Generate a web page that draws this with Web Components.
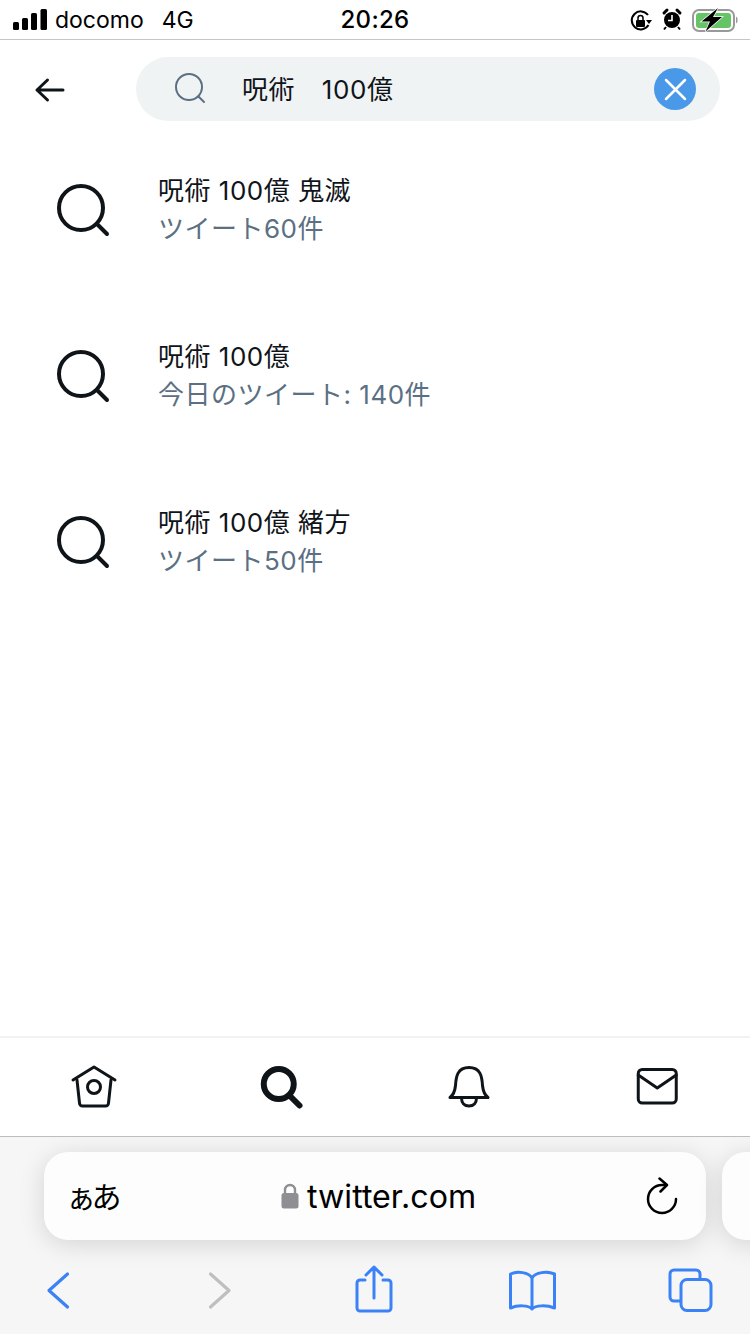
<!DOCTYPE html>
<html lang="ja">
<head>
<meta charset="utf-8">
<title>呪術 100億</title>
<style>
html, body { margin: 0; background: #fff; }
body { font-family: Inter, "Noto Sans CJK JP", sans-serif; }
#page { display: flex; flex-direction: column; width: 750px; height: 1334px; overflow: hidden; }
#results { flex: 1; }
</style>
</head>
<body>
<div id="page">
  <status-bar></status-bar>
  <search-header>呪術　100億</search-header>
  <div id="results">
    <result-row><span>呪術 100億 鬼滅</span><span slot="sub">ツイート60件</span></result-row>
    <result-row><span>呪術 100億</span><span slot="sub">今日のツイート: 140件</span></result-row>
    <result-row><span>呪術 100億 緒方</span><span slot="sub">ツイート50件</span></result-row>
  </div>
  <tab-bar></tab-bar>
  <safari-bar></safari-bar>
</div>

<script>
class StatusBar extends HTMLElement {
  constructor() {
    super();
    this.attachShadow({ mode: "open" }).innerHTML = `
      <style>
        :host { display: flex; align-items: center; height: 39px; border-bottom: 1px solid #c6c6c8; box-sizing: content-box; position: relative; color: #000; font-family: Inter, sans-serif; }
        .left { display: flex; align-items: center; padding-left: 13px; font-size: 23px; }
        .left svg { margin-right: 8px; }
        .net { margin-left: 18px; }
        .time { position: absolute; left: 0; right: 0; text-align: center; font-size: 24px; font-weight: 500; letter-spacing: .3px; }
        .right { margin-left: auto; display: flex; align-items: center; padding-right: 8px; }
      </style>
      <div class="left">
        <svg width="34" height="21" viewBox="0 0 34 21"><rect x="0" y="13" width="6" height="8" rx="1.500"/><rect x="9" y="9" width="6" height="12" rx="1.500"/><rect x="18" y="4" width="6" height="17" rx="1.500"/><rect x="27.500" y="0" width="6.500" height="21" rx="1.500"/></svg>
        <span>docomo</span><span class="net">4G</span>
      </div>
      <div class="time">20:26</div>
      <div class="right">
        <svg width="114" height="30" viewBox="0 0 114 30">
          <path d="M20 10A9 9 0 1 0 20.500 20" fill="none" stroke="#000" stroke-width="2"/>
          <path d="M18 15h6l-3 4z"/>
          <rect x="8" y="15" width="9" height="7" rx="1"/>
          <path d="M10 15v-2a2.500 2.500 0 0 1 5 0v2" fill="none" stroke="#000" stroke-width="1.500"/>
          <circle cx="44" cy="15" r="8"/>
          <path d="M44 10v5.500h-4" fill="none" stroke="#fff" stroke-width="1.600"/>
          <path d="M36 8l3-3M52 8l-3-3" stroke="#000" stroke-width="3" stroke-linecap="round"/>
          <path d="M38 22l-2 2.500M50 22l2 2.500" stroke="#000" stroke-width="2"/>
          <rect x="65" y="5" width="41" height="21" rx="6" fill="none" stroke="#999" stroke-width="2"/>
          <rect x="68" y="8" width="35" height="15" rx="3" fill="#65c466"/>
          <path d="M108 11.500v7a3 3 0 0 0 1.500-3.500a3 3 0 0 0-1.500-3.500z" fill="#999"/>
          <path d="M90 3L73.500 16.500h8.500l-4.500 10L94 12h-9z" stroke="#fff" stroke-width="1.500" paint-order="stroke"/>
        </svg>
      </div>`;
  }
}

class SearchHeader extends HTMLElement {
  constructor() {
    super();
    this.attachShadow({ mode: "open" }).innerHTML = `
      <style>
        :host { display: flex; align-items: center; padding: 17px 30px 6px 30px; }
        .back { display: block; width: 36px; height: 30px; margin-right: 70px; }
        .pill { flex: 1; height: 64px; border-radius: 32px; background: #eff3f4; display: flex; align-items: center; padding: 0 24px 0 36px; color: #0f1419; font-size: 26px; letter-spacing: .6px; }
        .text { margin-left: 34px; flex: 1; padding-bottom: 4px; }
      </style>
      <svg class="back" viewBox="0 0 36 30"><path d="M7 16h26M17.500 6L7 16l10.500 10" fill="none" stroke="#0f1419" stroke-width="3" stroke-linecap="round" stroke-linejoin="round"/></svg>
      <div class="pill">
        <svg width="36" height="36" viewBox="0 0 36 36"><circle cx="17" cy="16" r="13" fill="none" stroke="#5b7083" stroke-width="2"/><path d="M26.500 25.500L32 31" stroke="#5b7083" stroke-width="2" stroke-linecap="round"/></svg>
        <span class="text"><slot></slot></span>
        <svg width="42" height="42" viewBox="0 0 42 42"><circle cx="21" cy="21" r="21" fill="#4a99e9"/><path d="M12 12l19 19M31 12L12 31" stroke="#fff" stroke-width="2.500" stroke-linecap="round"/></svg>
      </div>`;
  }
}

class ResultRow extends HTMLElement {
  constructor() {
    super();
    this.attachShadow({ mode: "open" }).innerHTML = `
      <style>
        :host { display: flex; align-items: center; height: 166px; padding-left: 54px; box-sizing: border-box; letter-spacing: .5px; }
        svg { flex: none; margin: 2px 45px 0 0; }
        .main { color: #0f1419; font-size: 26px; line-height: 38px; margin-left: -1px; }
        .sub { color: #5b7083; font-size: 26px; line-height: 38px; margin-left: -1px; }
      </style>
      <svg width="60" height="60" viewBox="0 0 60 60"><circle cx="27" cy="27" r="22" fill="none" stroke="#0f1419" stroke-width="4"/><path d="M43 43l10 10" stroke="#0f1419" stroke-width="4" stroke-linecap="round"/></svg>
      <div>
        <div class="main"><slot></slot></div>
        <div class="sub"><slot name="sub"></slot></div>
      </div>`;
  }
}

class TabBar extends HTMLElement {
  constructor() {
    super();
    this.attachShadow({ mode: "open" }).innerHTML = `
      <style>
        :host { display: flex; height: 98px; border-top: 2px solid #eff3f4; box-sizing: content-box; background: #fff; }
        div { flex: 1; display: flex; align-items: center; justify-content: center; }
        svg { fill: none; stroke: #0f1419; stroke-width: 3; stroke-linecap: round; stroke-linejoin: round; }
      </style>
      <div><svg width="50" height="50" viewBox="0 0 50 50"><path d="M4 18L25 5l21 13"/><path d="M8 18l2.500 23a3 3 0 0 0 3 3h23a3 3 0 0 0 3-3L42 18"/><circle cx="25" cy="25" r="6.500"/></svg></div>
      <div><svg width="50" height="50" viewBox="0 0 50 50"><circle cx="22.750" cy="22" r="15" stroke-width="6"/><path d="M34 34l9.500 9.500" stroke-width="6"/></svg></div>
      <div><svg width="50" height="50" viewBox="0 0 50 50"><path d="M6 35.500c4-3 5-7 5.500-12 .5-9 2-18 13.500-18s13 9 13.500 18c.5 5 1.500 9 5.500 12z"/><path d="M17.500 36c0 5 3 8 7.500 8s7.500-3 7.500-8"/></svg></div>
      <div><svg width="50" height="50" viewBox="0 0 50 50"><rect x="7.250" y="7.500" width="38" height="33.500" rx="4"/><path d="M7.250 13l19 13 19-13"/></svg></div>`;
  }
}

class SafariBar extends HTMLElement {
  constructor() {
    super();
    this.attachShadow({ mode: "open" }).innerHTML = `
      <style>
        :host { display: block; flex: none; height: 197px; background: #f6f6f6; border-top: 1px solid #bdbdbf; overflow: hidden; color: #000; }
        .urls { display: flex; gap: 16px; padding: 15px 0 0 44px; width: 900px; }
        .url { flex: none; width: 662px; height: 88px; border-radius: 24px; background: #fdfdfd; box-shadow: 0 4px 26px rgba(0,0,0,.14); display: flex; align-items: center; box-sizing: border-box; padding: 0 27px 0 26px; font-family: Inter, "Noto Sans CJK JP", sans-serif; }
        .peek { flex: none; width: 100px; height: 88px; border-radius: 24px; background: #fdfdfd; box-shadow: 0 4px 26px rgba(0,0,0,.14); }
        .aa { font-size: 30px; letter-spacing: -4.500px; width: 211px; white-space: nowrap; margin-left: -4px; margin-right: 4px; padding-bottom: 2px; }
        .host { display: flex; align-items: center; font-size: 32.200px; flex: 1; }
        .host svg { margin-right: 8px; }
        .tools { display: flex; justify-content: space-between; padding: 21px 30px 0 28px; }
        .tools svg { fill: none; stroke: #3b82f6; stroke-width: 3; stroke-linecap: round; stroke-linejoin: round; }
        .tools .off { stroke: #bfbfbf; }
      </style>
      <div class="urls">
        <div class="url">
          <div class="aa">ぁあ</div>
          <div class="host">
            <svg width="18" height="26" viewBox="0 0 18 26"><rect x="0.500" y="10" width="17" height="15.500" rx="2.500" fill="#8e8e93"/><path d="M4 11V7a5 5 0 0 1 10 0v4" fill="none" stroke="#8e8e93" stroke-width="2.400"/></svg>
            <span>twitter.com</span>
          </div>
          <svg width="34" height="38" viewBox="0 0 34 38" fill="none" stroke="#000" stroke-width="2.500" stroke-linecap="round" stroke-linejoin="round"><path d="M31 22a14 14 0 1 1-14-14h4"/><path d="M14.500 1.500L22 8l-6.500 6.500"/></svg>
        </div>
        <div class="peek"></div>
      </div>
      <div class="tools">
        <svg width="60" height="60" viewBox="0 0 60 60"><path d="M39.500 13L21 29.500 39.500 46" stroke-width="3.200"/></svg>
        <svg width="60" height="60" viewBox="0 0 60 60"><path d="M24.500 13L43 29.500 24.500 46" class="off" stroke-width="3.200"/></svg>
        <svg width="60" height="60" viewBox="0 0 60 60"><path d="M21 19h-5a3 3 0 0 0-3 3v25a3 3 0 0 0 3 3h28a3 3 0 0 0 3-3V22a3 3 0 0 0-3-3h-5"/><path d="M30 37V6M22 14l8-8 8 8"/></svg>
        <svg width="60" height="60" viewBox="0 0 60 60"><path d="M30 17C27 11 15 10 8.500 13v34c7-3 18-3 21.500 1 3.500-4 15-4 22.500-1V13c-7-3-19.500-2-22.500 4zM30 17v31"/></svg>
        <svg width="60" height="60" viewBox="0 0 60 60"><path d="M20 40h-6a4 4 0 0 1-4-4V13a4 4 0 0 1 4-4h22a4 4 0 0 1 4 4v5"/><rect x="21" y="18.500" width="30" height="31" rx="6"/></svg>
      </div>`;
  }
}

customElements.define("status-bar", StatusBar);
customElements.define("search-header", SearchHeader);
customElements.define("result-row", ResultRow);
customElements.define("tab-bar", TabBar);
customElements.define("safari-bar", SafariBar);
</script>
</body>
</html>
